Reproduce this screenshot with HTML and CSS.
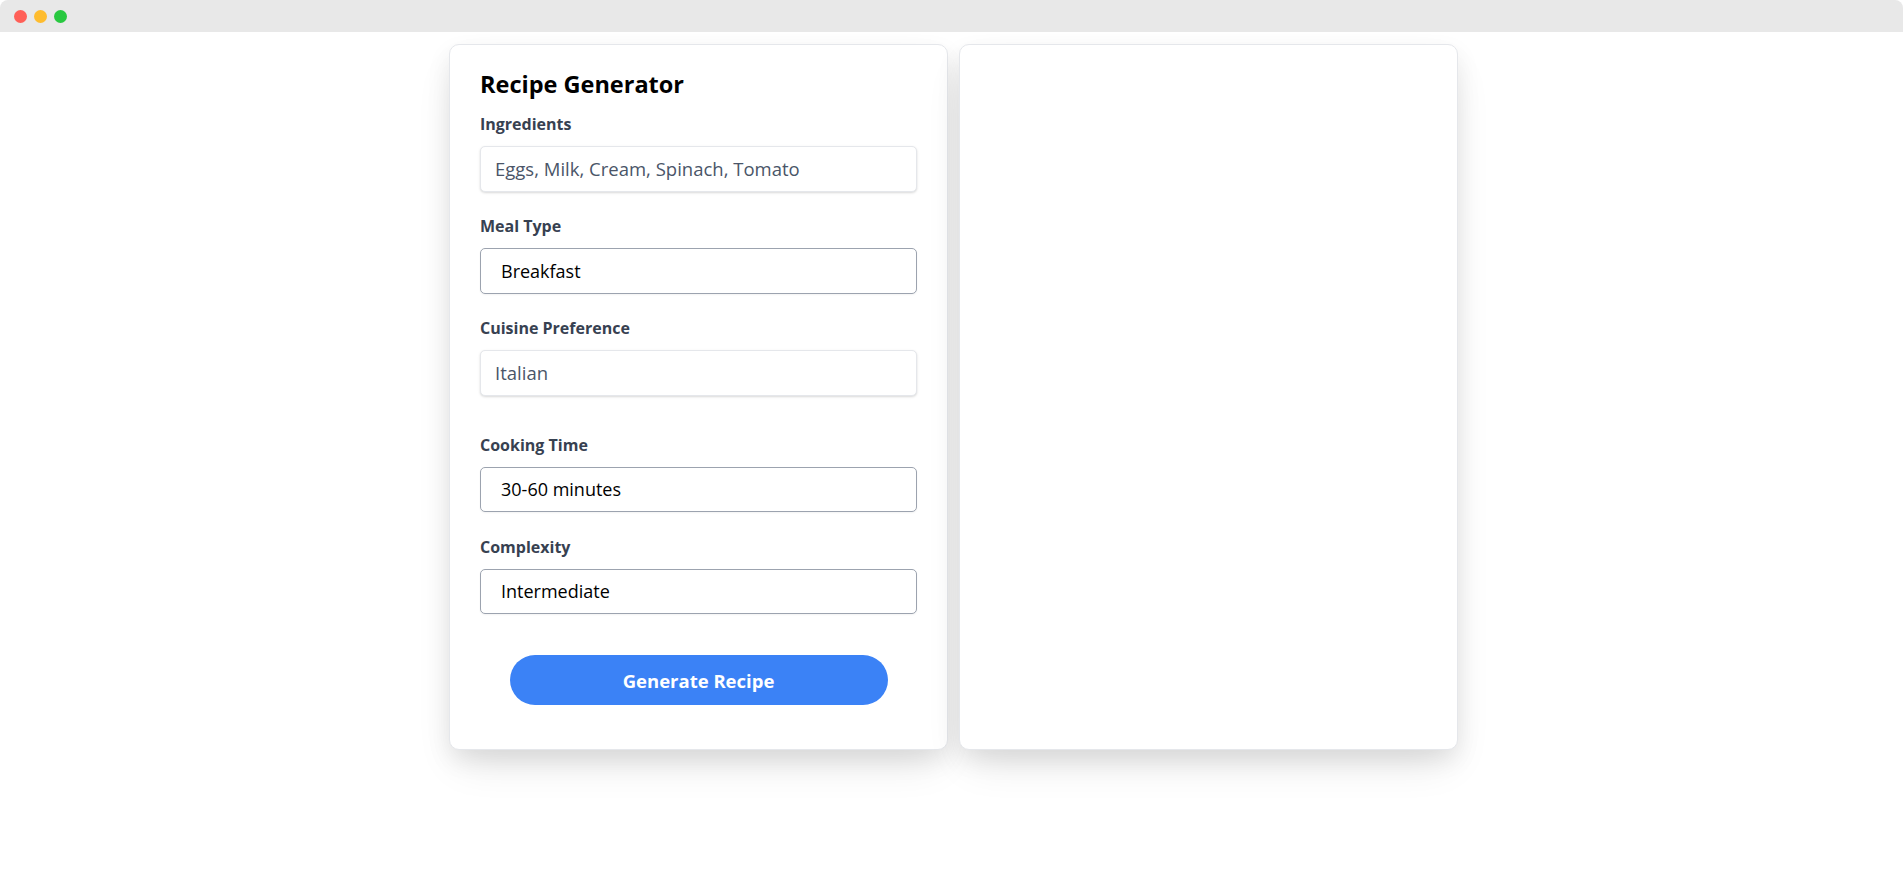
FILE: index.html
```html
<!DOCTYPE html>
<html lang="en">
<head>
<meta charset="utf-8">
<title>Recipe Generator</title>
<link rel="stylesheet" href="styles.css">
</head>
<body>
  <div class="titlebar">
    <span class="dot dot-red"></span>
    <span class="dot dot-yellow"></span>
    <span class="dot dot-green"></span>
  </div>
  <main class="page">
    <section class="card card-form">
      <h1 class="title">Recipe Generator</h1>
      <div class="field">
        <label class="label" for="ingredients">Ingredients</label>
        <input class="input" id="ingredients" type="text" value="Eggs, Milk, Cream, Spinach, Tomato">
      </div>
      <div class="field">
        <label class="label" for="meal">Meal Type</label>
        <select class="select" id="meal"><option>Breakfast</option></select>
      </div>
      <div class="field field-spaced">
        <label class="label" for="cuisine">Cuisine Preference</label>
        <input class="input" id="cuisine" type="text" value="Italian">
      </div>
      <div class="field">
        <label class="label" for="time">Cooking Time</label>
        <select class="select" id="time"><option>30-60 minutes</option></select>
      </div>
      <div class="field">
        <label class="label" for="complexity">Complexity</label>
        <select class="select" id="complexity"><option>Intermediate</option></select>
      </div>
      <div class="actions">
        <button class="button" type="button">Generate Recipe</button>
      </div>
    </section>
    <section class="card card-result"></section>
  </main>
</body>
</html>
```

FILE: styles.css
```css
* {
  box-sizing: border-box;
}

html, body {
  margin: 0;
  padding: 0;
  background: #ffffff;
}

body {
  font-family: "Open Sans", "Noto Sans", sans-serif;
  color: #000;
  min-height: 100vh;
}

.titlebar {
  height: 32px;
  background: #e8e8e8;
  display: flex;
  align-items: center;
  gap: 7px;
  padding-left: 13.5px;
  border-top-left-radius: 8px;
  border-top-right-radius: 8px;
}

.dot {
  width: 13px;
  height: 13px;
  border-radius: 50%;
  display: block;
}

.dot-red { background: #ff5f57; }
.dot-yellow { background: #febc2e; }
.dot-green { background: #28c840; }

.page {
  display: flex;
  justify-content: center;
  align-items: stretch;
  gap: 11px;
  padding: 12px 0 80px 4px;
}

.card {
  background: #ffffff;
  border: 1px solid #e5e7eb;
  border-radius: 10px;
  box-shadow: 0 10px 25px rgba(0, 0, 0, 0.08), 0 20px 40px -10px rgba(0, 0, 0, 0.12);
}

.card-form {
  width: 499px;
  padding: 23px 30px 44px;
}

.card-result {
  width: 499px;
}

.title {
  margin: 0 0 12px;
  font-size: 23.5px;
  line-height: 32px;
  font-weight: 700;
  color: #000;
}

.field {
  margin-bottom: 22.5px;
}

.field-spaced {
  margin-bottom: 37px;
}

.label {
  display: block;
  font-size: 16px;
  line-height: 24px;
  font-weight: 700;
  color: #374151;
  margin-bottom: 10px;
}

.input,
.select {
  display: block;
  width: 100%;
  height: 45.5px;
  margin: 0;
  font-family: inherit;
  border-radius: 5px;
  outline: none;
}

.input {
  border: 1px solid #e5e7eb;
  padding: 0 14px;
  font-size: 18.5px;
  color: #4a5568;
  background: #fff;
  box-shadow: 0 1px 3px rgba(0, 0, 0, 0.1), 0 1px 2px rgba(0, 0, 0, 0.06);
}

.select {
  -webkit-appearance: none;
  appearance: none;
  border: 1px solid #9ca3af;
  padding: 0 20px;
  font-size: 18px;
  color: #000;
  background: #fff;
  box-shadow: 0 1px 2px rgba(0, 0, 0, 0.05);
}

.actions {
  display: flex;
  justify-content: center;
  padding-top: 18.5px;
}

.button {
  width: 378px;
  height: 50px;
  border: none;
  border-radius: 25px;
  background: #3b82f6;
  color: #fff;
  font-family: inherit;
  font-size: 18.5px;
  font-weight: 700;
  cursor: pointer;
}
```
